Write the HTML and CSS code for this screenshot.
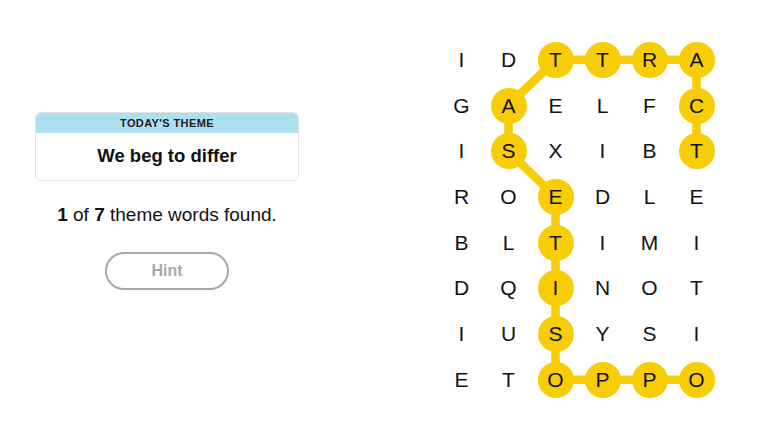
FILE: index.html
```html
<!DOCTYPE html>
<html>
<head>
    <title>Strands</title>
    <link rel="stylesheet" href="styles.css">
</head>
<body>
    <div class="game">
        <div class="side">
            <div class="theme-card">
                <div class="theme-label">Today's Theme</div>
                <div class="theme-text">We beg to differ</div>
            </div>
            <div class="status"><b>1</b> of <b>7</b> theme words found.</div>
            <button class="hint">Hint</button>
        </div>

        <div class="board" id="board">
            <svg class="path" width="282" height="366" viewBox="0 0 282 366">
                <polyline points="258.5,114.25 258.5,68.55 258.5,22.85 211.5,22.85 164.5,22.85 117.5,22.85 70.5,68.55 70.5,114.25 117.5,159.95 117.5,205.65 117.5,251.35 117.5,297.05 117.5,342.75 164.5,342.75 211.5,342.75 258.5,342.75" />
            </svg>
        </div>
    </div>

    <script>
        const letters = [
            'IDTTRA',
            'GAELFC',
            'ISXIBT',
            'ROEDLE',
            'BLTIMI',
            'DQINOT',
            'IUSYSI',
            'ETOPPO'
        ];
        const found = ['0,2','0,3','0,4','0,5','1,1','1,5','2,1','2,5','3,2','4,2','5,2','6,2','7,2','7,3','7,4','7,5'];
        const board = document.getElementById('board');

        letters.forEach((row, r) => {
            row.split('').forEach((ch, c) => {
                const cell = document.createElement('div');
                cell.className = 'cell';
                const dot = document.createElement('span');
                dot.className = found.includes(r + ',' + c) ? 'dot on' : 'dot';
                dot.textContent = ch;
                cell.appendChild(dot);
                board.appendChild(cell);
            });
        });
    </script>
</body>
</html>
```

FILE: styles.css
```css
body {
    margin: 0;
    font-family: "Liberation Sans", Arial, sans-serif;
    color: #121212;
    background: #fff;
}
.game {
    display: flex;
    align-items: flex-start;
}
.side {
    width: 334px;
    padding-top: 112px;
    display: flex;
    flex-direction: column;
    align-items: center;
}
.theme-card {
    width: 264px;
    border: 1px solid #e2e2e2;
    border-radius: 6px;
    overflow: hidden;
    box-sizing: border-box;
}
.theme-label {
    background: #aedfee;
    height: 20px;
    line-height: 21px;
    text-align: center;
    font-size: 11px;
    font-weight: bold;
    text-transform: uppercase;
    letter-spacing: 0.4px;
    color: #222;
}
.theme-text {
    height: 47px;
    line-height: 46px;
    text-align: center;
    font-size: 18.5px;
    font-weight: bold;
}
.status {
    margin-top: 23px;
    font-size: 19px;
}
.hint {
    margin-top: 26px;
    width: 124px;
    height: 38px;
    border: 2px solid #a8a8a8;
    border-radius: 19px;
    background: #fff;
    color: #a8a8a8;
    font-family: inherit;
    font-size: 16px;
    font-weight: bold;
}
.board {
    position: relative;
    margin-top: 37px;
    margin-left: 104px;
    display: grid;
    grid-template-columns: repeat(6, 47px);
    grid-template-rows: repeat(8, 45.7px);
}
.path {
    position: absolute;
    left: 0;
    top: 0;
    z-index: 0;
}
.path polyline {
    fill: none;
    stroke: #f8cd05;
    stroke-width: 8.5;
    stroke-linejoin: round;
    stroke-linecap: round;
}
.cell {
    position: relative;
    z-index: 1;
    display: flex;
    justify-content: center;
    align-items: center;
}
.dot {
    width: 36px;
    height: 36px;
    border-radius: 50%;
    display: flex;
    justify-content: center;
    align-items: center;
    font-size: 21px;
}
.dot.on {
    background: #f8cd05;
}
```
